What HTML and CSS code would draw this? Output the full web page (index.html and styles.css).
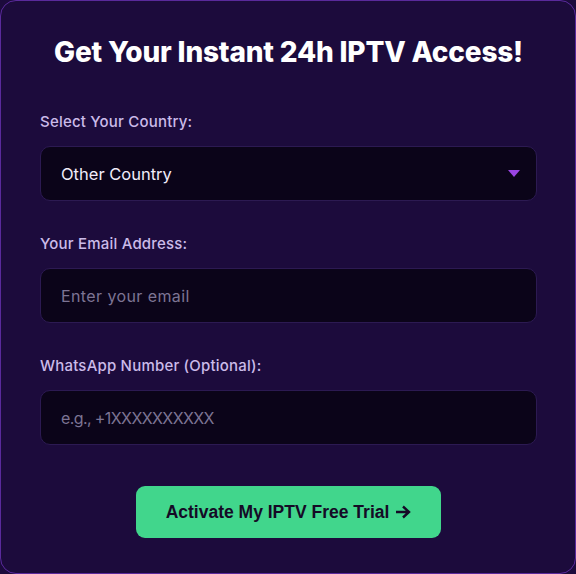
FILE: index.html
```html
<!DOCTYPE html>
<html lang="en">
<head>
<meta charset="UTF-8" />
<meta name="viewport" content="width=device-width, initial-scale=1" />
<title>Free IPTV Trial</title>
<link rel="stylesheet" href="styles.css">
</head>
<body>

<div class="trial-card">
  <h1 class="title">Get Your Instant 24h IPTV Access!</h1>

  <form class="trial-form" onsubmit="return false;">
    <div class="field">
      <label for="country">Select Your Country:</label>
      <div class="select-wrap">
        <select id="country">
          <option>Other Country</option>
          <option>United States</option>
          <option>United Kingdom</option>
          <option>Canada</option>
        </select>
        <span class="caret"></span>
      </div>
    </div>

    <div class="field">
      <label for="email">Your Email Address:</label>
      <input type="email" id="email" placeholder="Enter your email" />
    </div>

    <div class="field">
      <label for="whatsapp">WhatsApp Number (Optional):</label>
      <input type="text" id="whatsapp" placeholder="e.g., +1XXXXXXXXXX" />
    </div>

    <div class="actions">
      <button type="submit" class="submit-btn">
        Activate My IPTV Free Trial
        <svg class="arrow" width="16" height="14" viewBox="0 0 16 14">
          <path d="M1 7h13M8 1.5L14 7l-6 5.5" fill="none" stroke="currentColor" stroke-width="2.4" />
        </svg>
      </button>
    </div>
  </form>
</div>

</body>
</html>
```

FILE: styles.css
```css
* {
  box-sizing: border-box;
}
body {
  margin: 0;
  background: #1c0b3c;
  font-family: "Inter", "Open Sans", sans-serif;
}
.trial-card {
  min-height: 574px;
  background: #1c0b3c;
  border: 1px solid #5a2a9c;
  border-radius: 16px;
  padding: 35px 38px 30px 39px;
}
.title {
  margin: 0 0 44px;
  text-align: center;
  color: #ffffff;
  font-size: 28px;
  font-weight: 800;
  line-height: 32px;
  letter-spacing: -0.2px;
}
.field {
  margin-bottom: 33px;
}
.field label {
  display: block;
  color: #cbbbe9;
  font-size: 15px;
  font-weight: 500;
  line-height: 20px;
  margin-bottom: 14px;
  letter-spacing: 0.2px;
}
.field input,
.field select {
  display: block;
  width: 100%;
  height: 55px;
  padding: 0 20px;
  background: #0b0419;
  border: 1px solid #2c1a52;
  border-radius: 10px;
  color: #f1ecfa;
  font-family: inherit;
  font-size: 16px;
  outline: none;
}
.field select {
  font-size: 16.5px;
  appearance: none;
  -webkit-appearance: none;
}
.field input::placeholder {
  color: #7d7494;
}
.field input[type="email"]::placeholder {
  letter-spacing: 0.4px;
}
.field input[type="text"]::placeholder {
  letter-spacing: -0.6px;
}
.select-wrap {
  position: relative;
}
.caret {
  position: absolute;
  right: 17px;
  top: 24px;
  width: 0;
  height: 0;
  border-left: 6px solid transparent;
  border-right: 6px solid transparent;
  border-top: 7px solid #9b45e4;
}
.actions {
  display: flex;
  justify-content: center;
  padding-top: 8px;
}
.submit-btn {
  display: flex;
  align-items: center;
  justify-content: center;
  gap: 6px;
  width: 305px;
  height: 52px;
  background: #41d68c;
  border: none;
  border-radius: 9px;
  color: #150a26;
  font-family: "Liberation Sans", Arial, sans-serif;
  font-size: 17.5px;
  font-weight: bold;
  cursor: pointer;
}
.submit-btn:hover {
  background: #36c47d;
}
.arrow {
  display: block;
}
```
